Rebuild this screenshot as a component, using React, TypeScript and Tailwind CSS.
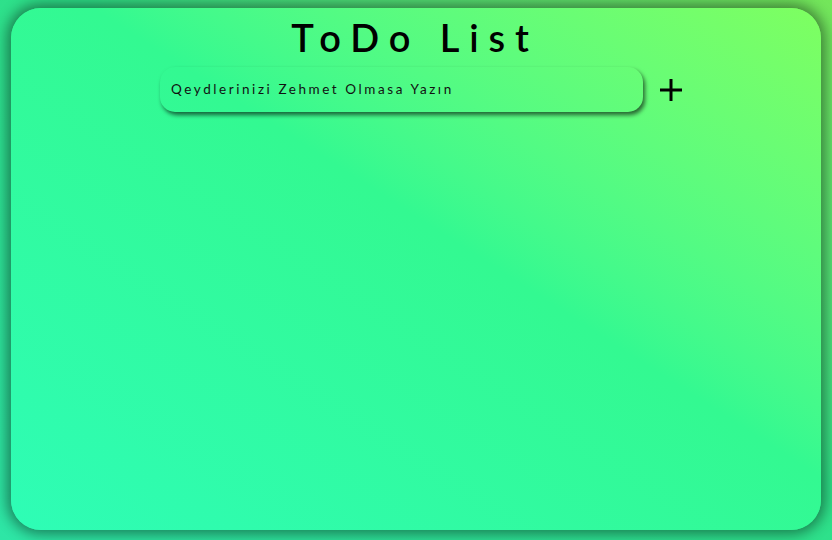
export default function App() {
  return (
    <div className="min-h-screen bg-linear-to-tr from-[#2ee6a6] via-[#2ee088] via-55% to-[#74e65a] pt-[8px] pb-[10px] px-[11px]">
      <div className="h-[522px] rounded-[30px] bg-linear-to-tr from-[#2efdb6] via-[#33f991] via-55% to-[#7eff60] shadow-[0_0_14px_4px_rgba(0,0,0,0.45)] flex flex-col items-center">
        <h1 className="mt-[7px] mr-[2px] text-[38px] leading-[44px] font-semibold tracking-[0.26em] text-black font-['Lato','Liberation_Sans',sans-serif]">
          ToDo List
        </h1>
        <div className="mt-[8px] ml-[12px] flex items-center gap-[15px]">
          <div className="w-[483px] h-[45px] rounded-[15px] bg-transparent shadow-[2px_3px_4px_rgba(0,0,0,0.6)] flex items-center px-[11px]">
            <span className="text-[13.5px] tracking-[0.19em] text-[#111] font-['Lato','Liberation_Sans',sans-serif]">
              Qeydlerinizi Zehmet Olmasa Yazın
            </span>
          </div>
          <svg width="26" height="26" viewBox="0 0 26 26" className="mt-[1px]">
            <path d="M13 2v22M2 13h22" stroke="#000" strokeWidth="3" />
          </svg>
        </div>
      </div>
    </div>
  )
}
